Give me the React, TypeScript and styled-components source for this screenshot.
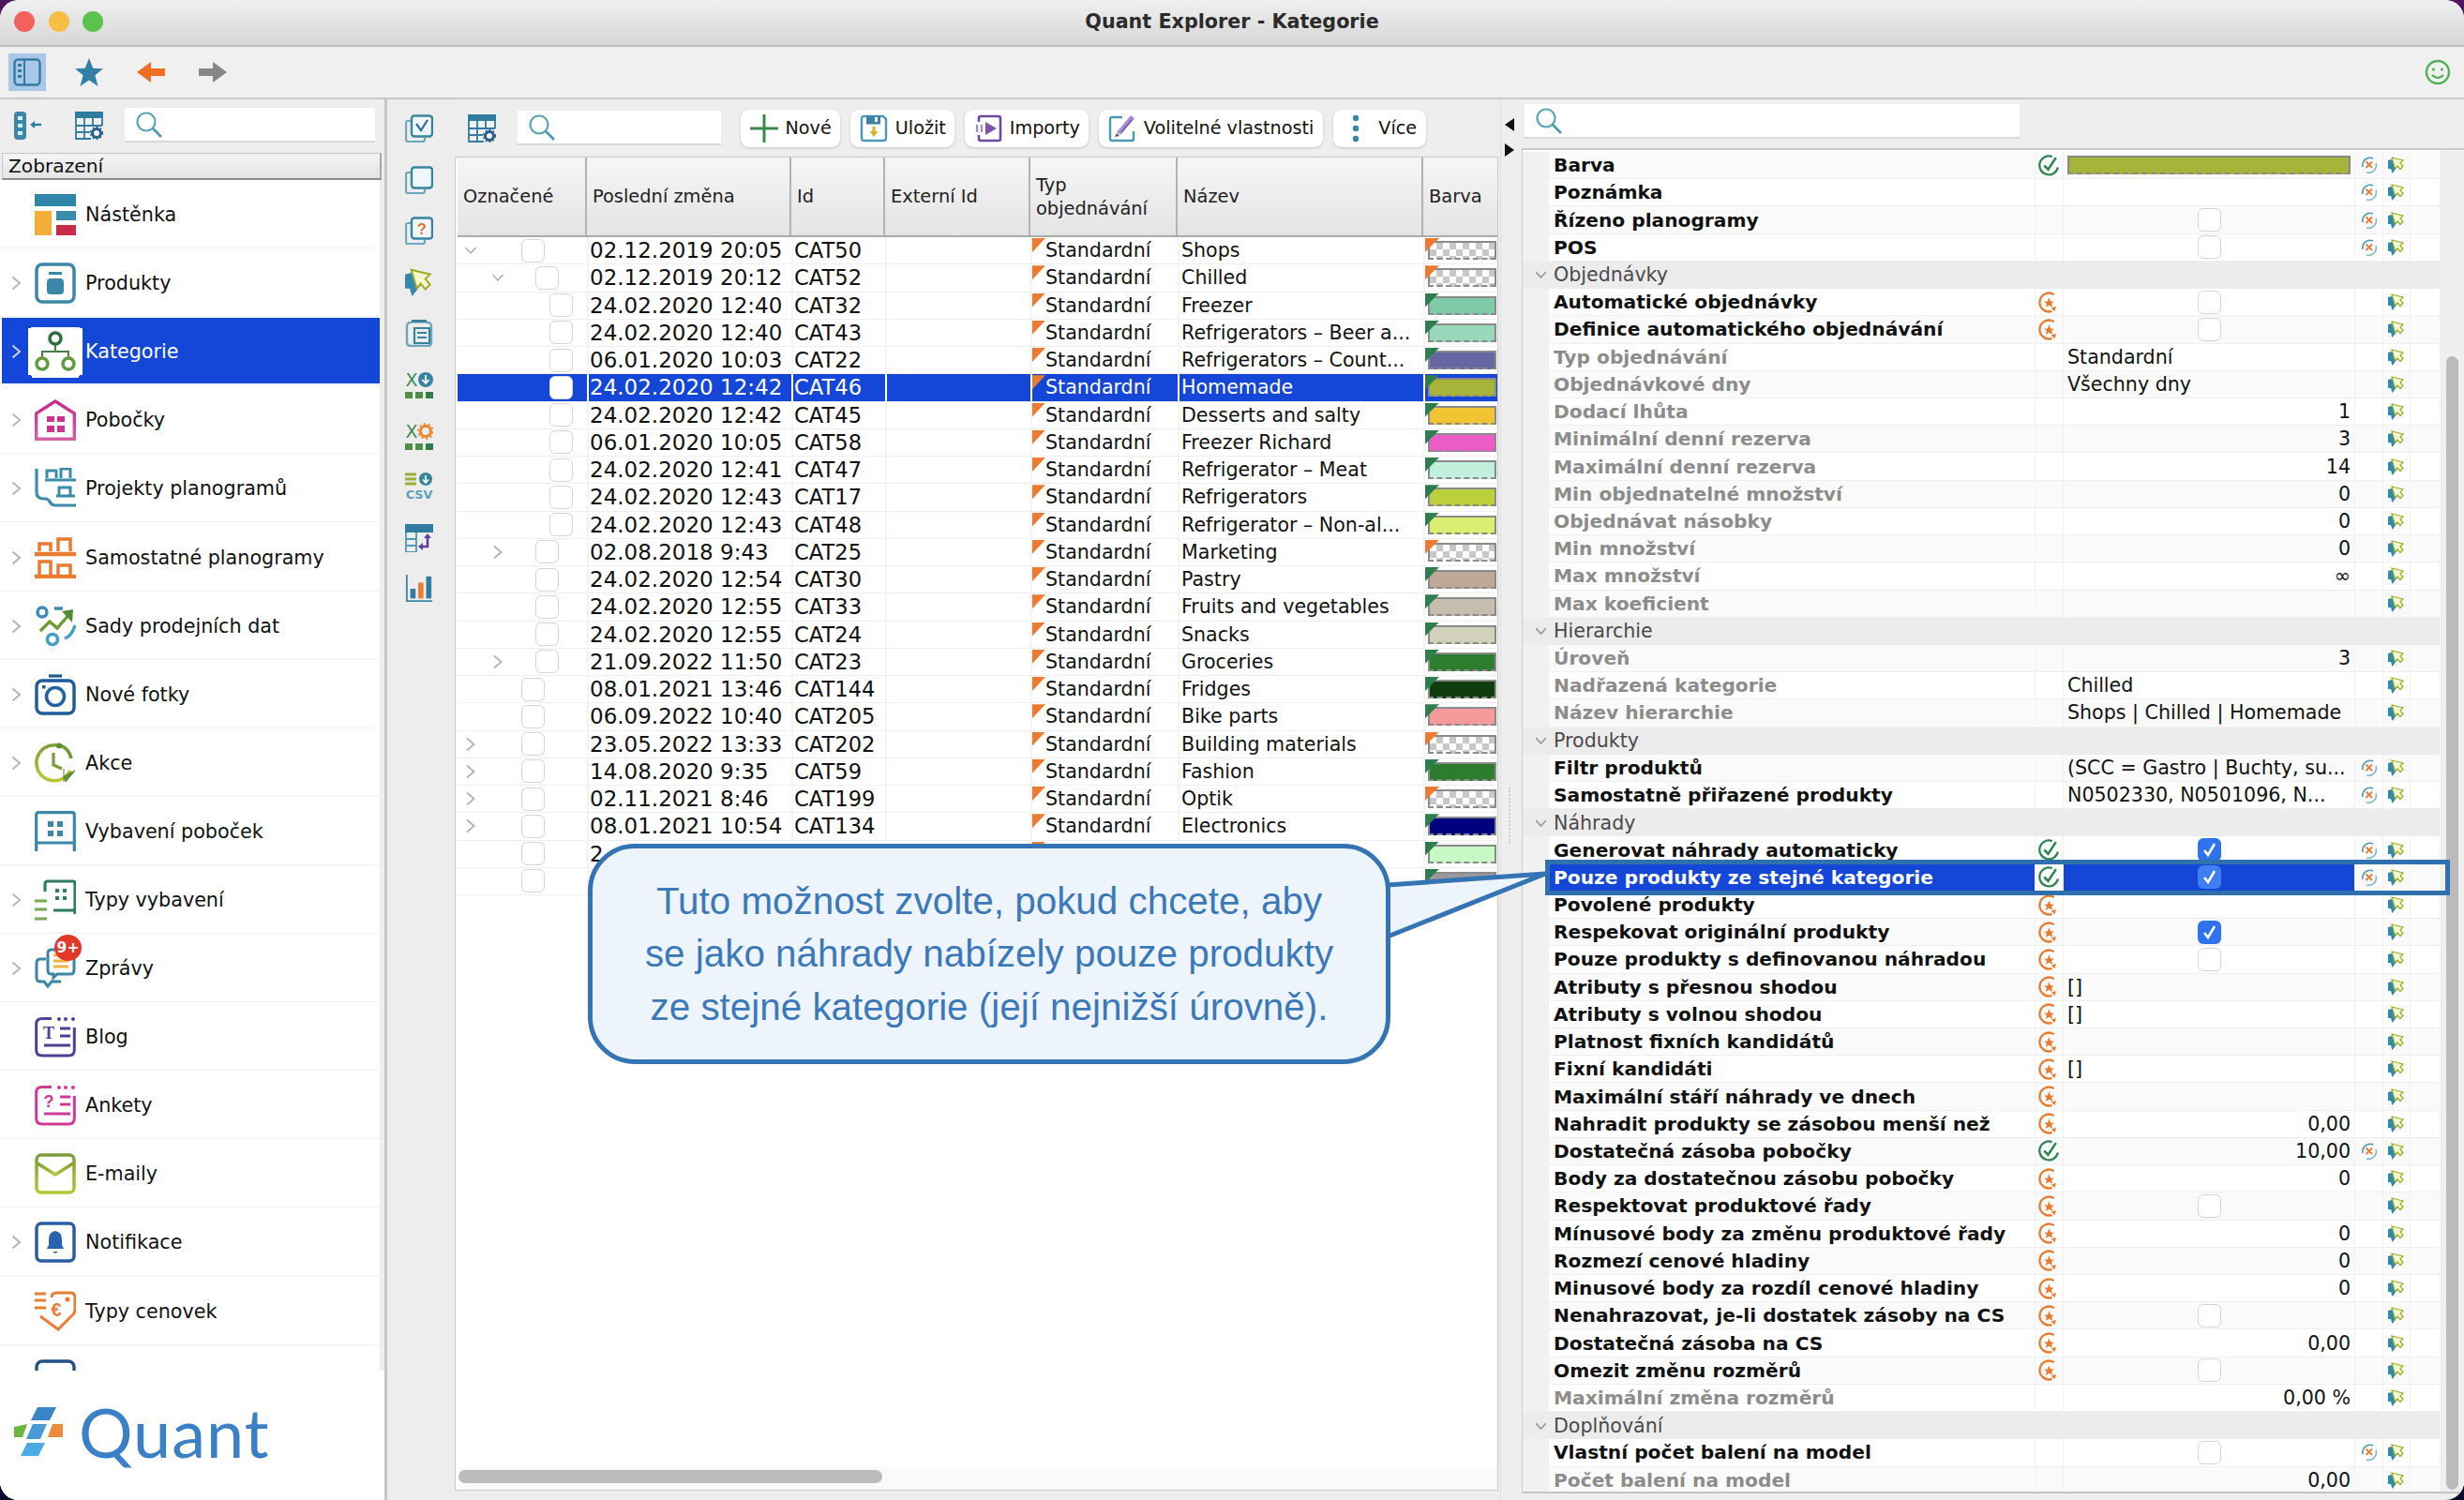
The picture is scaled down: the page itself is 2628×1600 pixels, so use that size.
import React from 'react';
import styled, { createGlobalStyle } from 'styled-components';

const Global = createGlobalStyle`
  html, body { margin: 0; padding: 0; background: linear-gradient(180deg, #4d1660 0%, #1a1240 50%, #0a0c2c 100%); }
  body { width: 2628px; height: 1600px; overflow: hidden; font-family: "DejaVu Sans", sans-serif; color: #111; }
  * { box-sizing: border-box; }
`;

const Window = styled.div`
  position: relative;
  width: 2628px;
  height: 1600px;
  border-radius: 20px;
  overflow: hidden;
  background: #eeeeee;
  display: flex;
  flex-direction: column;
`;
const TitleBar = styled.div`
  height: 50px;
  flex: none;
  background: linear-gradient(180deg, #f0f0f0, #d6d6d6);
  border-bottom: 2px solid #bcbcbc;
  display: grid;
  grid-template-columns: 1fr auto 1fr;
  align-items: center;
  padding: 0 15px;
`;
const Lights = styled.div`display: flex; gap: 14.5px; margin-top: -2px;`;
const Light = styled.span<{ $c: string }>`
  width: 22px; height: 22px; border-radius: 50%; background: ${p => p.$c};
`;
const WindowTitle = styled.div`font-size: 20.7px; font-weight: 700; color: #2b2b2b; margin-top: -3px;`;

const MainToolbar = styled.div`
  height: 56px;
  flex: none;
  display: flex;
  align-items: center;
  padding: 0 0 0 9px;
  background: #f0f0f0;
  border-bottom: 2px solid #c8c8c8;
`;
const ToolToggle = styled.div<{ $on?: boolean }>`
  width: 40px; height: 40px;
  display: flex; align-items: center; justify-content: center;
  margin-right: 26px;
  background: ${p => (p.$on ? '#a9c7e8' : 'transparent')};
`;
const ToolSpacer = styled.div`flex: 1;`;
const SmileSlot = styled.div`width: 28px; height: 28px; margin-right: 14px;`;

const Workspace = styled.div`flex: 1; display: flex; min-height: 0;`;

const Sidebar = styled.aside`
  width: 410px; flex: none; display: flex; flex-direction: column; background: #eee;
`;
const SideTools = styled.div`
  height: 57px; flex: none; display: flex; align-items: center; padding: 0 0 2px 15px;
`;
const SideToolIcon = styled.div<{ $gap: number }>`
  width: 30px; height: 30px; margin-right: ${p => p.$gap}px;
`;
const SearchBox = styled.div<{ $w: number; $h?: number }>`
  width: ${p => p.$w}px;
  height: ${p => p.$h ?? 37}px;
  flex: none;
  display: flex; align-items: center;
  padding-left: 11px;
  background: #fff;
  border-bottom: 2px solid #d8d8d8;
`;
const CenterSearch = styled(SearchBox)`margin-right: 10px;`;
const SideTitle = styled.div`
  height: 29px; flex: none;
  margin: 0 3px 0 2px;
  padding-left: 6px;
  display: flex; align-items: center;
  font-size: 20.2px;
  background: linear-gradient(180deg, #f5f5f5, #e4e4e4);
  border: 1px solid #c4c4c4;
  border-bottom: 2px solid #8d8d8d;
  border-right: 2px solid #a8a8a8;
`;
const NavList = styled.nav`
  height: 1270px; flex: none; overflow: hidden; background: #fff; margin-right: 5px;
`;
const NavRow = styled.div`
  position: relative;
  height: 73.1px;
  display: flex; align-items: center;
  padding: 2px 0 0 12px;
  border-bottom: 1px solid #f1f1f1;
`;
const NavHighlight = styled.div`
  position: absolute; left: 2px; right: 0; top: 1px; bottom: 1px; background: #1446d8;
`;
const NavChevron = styled.div`
  position: relative; width: 11px; height: 16px; margin-right: 14px; flex: none;
`;
const NavIconBox = styled.div<{ $sel?: boolean }>`
  position: relative; width: 44px; height: 44px; flex: none; margin-right: 10px;
  ${p => p.$sel && `
    background: #fff;
    box-shadow: 0 0 0 4px #fff, 4px 0 0 3px #fff, -4px 0 0 3px #fff, 0 3px 0 3px #fff;
  `}
`;
const NavLabel = styled.span<{ $sel?: boolean }>`
  position: relative; font-size: 20.7px; color: ${p => (p.$sel ? '#fff' : '#111')};
`;
const Badge = styled.span`
  position: absolute; left: 21px; top: -14px;
  width: 29px; height: 28px; border-radius: 50%;
  background: #e2382b; color: #fff;
  font-size: 15.5px; font-weight: 700;
  display: flex; align-items: center; justify-content: center;
`;
const LogoArea = styled.div`
  flex: 1; background: #fff; display: flex; align-items: center; padding: 0 0 8px 15px; gap: 17px;
`;
const LogoText = styled.span`
  font-family: "Lato", sans-serif; font-size: 72px; font-weight: 400; color: #3a80c6; line-height: 1; letter-spacing: 1px;
`;

const ToolStrip = styled.div`
  width: 74px; flex: none; border-left: 3px solid #c6c6c6;
  display: flex; flex-direction: column; align-items: center;
  padding: 16px 3px 0 0; gap: 24.6px; background: #ededed;
`;
const StripIcon = styled.div`width: 30px; height: 30px;`;

const CenterPane = styled.section`
  width: 1116px; flex: none; display: flex; flex-direction: column; padding-bottom: 10px;
`;
const CenterTools = styled.div`
  height: 61px; flex: none; display: flex; align-items: center; padding-left: 15px; gap: 11px;
`;
const TableIconSlot = styled.div`width: 30px; height: 30px; margin-right: 12px;`;
const ToolButton = styled.button`
  height: 40px; display: flex; align-items: center; gap: 8px; padding: 0 9.5px;
  border: 0; border-radius: 9px; background: #fff;
  box-shadow: 0 1px 3px rgba(0,0,0,.18);
  font: 19.2px "DejaVu Sans", sans-serif; color: #111;
`;
const MoreDots = styled.div`width: 30px; height: 30px; margin-right: 1px;`;
const TableBox = styled.div`
  flex: 1; display: flex; flex-direction: column; margin: 0 2px 0 1px;
  background: #fff; border: 1px solid #c9c9c9; padding-left: 2px; min-height: 0;
`;
const cols = '138px 218px 100px 155px 157px 262px 1fr';
const HeadRow = styled.div`
  height: 85px; flex: none; display: grid; grid-template-columns: ${cols};
  border-bottom: 2px solid #ababab;
  background: linear-gradient(180deg, #f6f6f6, #e4e4e4);
`;
const HeadCell = styled.div`
  display: flex; align-items: center; padding: 0 0 0 6px;
  font-size: 19.4px; line-height: 25px; color: #222;
  border-right: 2px solid #b2b2b2;
  &:last-child { border-right: 0; }
`;
const HeadStack = styled.span`display: block;`;
const Body = styled.div`flex: 1; min-height: 0; overflow: hidden;`;
const TRow = styled.div<{ $sel?: boolean }>`
  height: 29.25px; display: grid; grid-template-columns: ${cols};
  border-bottom: 1px solid #efefef;
  color: ${p => (p.$sel ? '#fff' : '#111')};
  background: ${p => (p.$sel ? '#1446d8' : '#fff')};
`;
const TreeCell = styled.div<{ $level: number }>`
  display: flex; align-items: center; padding-left: ${p => 7 + 29 * p.$level}px;
`;
const TreeCheck = styled.div<{ $level: number }>`
  margin-left: ${p => 47 - 14 * p.$level}px;
`;
const Cell = styled.div<{ $size?: number; $pad?: number; $sel?: boolean }>`
  display: flex; align-items: center; white-space: nowrap; overflow: hidden;
  font-size: ${p => p.$size ?? 20.6}px;
  padding-left: ${p => p.$pad ?? 1}px;
  border-left: 2px solid ${p => (p.$sel ? '#fff' : '#f4f4f4')};
`;
const TypeCell = styled(Cell)`
  position: relative;
  &::before {
    content: ''; position: absolute; left: 0; top: 1px; width: 14px; height: 15px;
    background: #ee7a30; clip-path: polygon(0 0, 100% 0, 0 100%);
  }
`;
const SwatchCell = styled.div<{ $sel?: boolean }>`
  position: relative; display: flex; align-items: center; padding-left: 3px;
  border-left: 2px solid ${p => (p.$sel ? '#fff' : '#f4f4f4')};
`;
const Corner = styled.span<{ $c: string }>`
  position: absolute; left: 0; top: 1px; width: 15px; height: 15px;
  background: ${p => p.$c}; clip-path: polygon(0 0, 100% 0, 0 100%);
`;
const Swatch = styled.span<{ $c?: string; $full?: boolean }>`
  display: block;
  width: ${p => (p.$full ? '303px' : '73px')};
  height: 20px;
  border: 2px solid #8a8a8a;
  border-bottom-style: dashed;
  background: ${p => p.$c ?? 'repeating-conic-gradient(#c8c8c8 0 25%, #fff 0 50%) 0 0 / 14px 14px'};
`;
const Check = styled.span<{ $on?: boolean; $sel?: boolean }>`
  display: flex; align-items: center; justify-content: center;
  width: 25px; height: 25px; border-radius: 6px;
  flex: none;
  background: ${p => (p.$sel && p.$on ? '#3f7ff2' : p.$on ? '#2f72ee' : '#fff')};
  border: ${p => (p.$on ? '0' : '1.5px solid #d4d4d4')};
`;
const HScroll = styled.div`height: 24px; flex: none; padding: 3px 0 0 1px; background: #fafafa;`;
const HThumb = styled.div`width: 452px; height: 14px; border-radius: 7px; background: #bcbcbc;`;

const Splitter = styled.div`
  width: 23px; flex: none; display: flex; flex-direction: column; align-items: center;
  padding: 20px 5px 0 0; gap: 13px; border-left: 1px solid #dedede;
`;
const Grip = styled.div`
  width: 0; height: 60px; margin-top: 660px; border-left: 2px dotted #cfcfcf;
`;
const RightPane = styled.section`width: 1005px; flex: none; display: flex; flex-direction: column;`;
const RightTools = styled.div`height: 52px; flex: none; padding: 5px 0 0 3px;`;
const RightBody = styled.div`
  height: 1435px; flex: none; display: flex;
  border-top: 2px solid #c9c9c9; border-bottom: 2px solid #c4c4c4; background: #fff;
`;
const PropList = styled.div`
  width: 979px; flex: none; overflow: hidden; padding-top: 2px; border-left: 1px solid #cfcfcf;
`;
const ScrollTrack = styled.div`flex: 1; background: #efefef; padding: 220px 6px 2px 7px;`;
const ScrollThumb = styled.div`height: 100%; border-radius: 7px; background: #bbbbbb;`;
const propCols = '28px 518px 30px 311px 30px 29px 1fr';
const PropRow = styled.div<{ $odd?: boolean }>`
  height: 29.23px; display: grid; grid-template-columns: ${propCols};
  background: ${p => (p.$odd ? '#fff' : '#fafafa')};
  border-bottom: 1px solid #f0f0f0;
`;
const SectionRow = styled.div`
  height: 29.23px; display: flex; align-items: center; background: #ececec;
  font-size: 20.6px; color: #4a4a4a;
`;
const SectionChev = styled.div`width: 33px; flex: none; display: flex; justify-content: flex-end; padding-right: 8px;`;
const Gutter = styled.div`background: #f1f1f1;`;
const PropName = styled.div<{ $gray?: boolean; $sel?: boolean }>`
  display: flex; align-items: center; padding-left: 5px; white-space: nowrap; overflow: hidden;
  font-size: 20.2px; font-weight: 700;
  color: ${p => (p.$sel ? '#fff' : p.$gray ? '#8c8c8c' : '#111')};
  background: ${p => (p.$sel ? '#1446d8' : 'transparent')};
`;
const IconCell = styled.div`
  display: flex; align-items: center; justify-content: center; border-left: 1px solid #f2f2f2;
`;
const PropValue = styled.div<{ $align?: string; $sel?: boolean }>`
  display: flex; align-items: center; white-space: nowrap; overflow: hidden;
  justify-content: ${p => (p.$align === 'right' ? 'flex-end' : p.$align === 'center' ? 'center' : 'flex-start')};
  padding: 0 4px 0 4px;
  font-size: 20.6px; color: #111;
  background: ${p => (p.$sel ? '#1446d8' : 'transparent')};
  border-left: 1px solid #f2f2f2;
`;

const Callout = styled.div`
  position: absolute; left: 627px; top: 900px; width: 856px; height: 235px;
  border: 5px solid #3574b4; border-radius: 50px; background: #eef4fb;
  display: flex; align-items: center; justify-content: center; text-align: center;
  font-family: "Liberation Sans", Arial, sans-serif; font-size: 40.4px; line-height: 56.5px; color: #3b79ba;
`;
const CalloutTail = styled.svg`position: absolute; left: 1476px; top: 925px; width: 180px; height: 80px;`;
const RowFocus = styled.div`
  position: absolute; left: 1648px; top: 917px; width: 965px; height: 38px; border: 5px solid #2f70ae;
`;

/* ---------- icons ---------- */
const Svg = (p: { s?: number; w?: number; h?: number; vb: string; children: React.ReactNode }) => (
  <svg width={p.w ?? p.s ?? 44} height={p.h ?? p.s ?? 44} viewBox={p.vb} fill="none" style={{ display: 'block' }}>{p.children}</svg>
);
const T = '#3a87a8';

const Nastenka = () => <Svg vb="0 0 44 44"><rect width="44" height="13" fill="#2f86a8"/><rect y="18" width="18" height="26" fill="#f2ae35"/><rect x="23" y="18" width="21" height="10" fill="#3a8cab"/><rect x="23" y="33" width="21" height="11" fill="#c92c46"/></Svg>;
const Produkt = () => <Svg vb="0 0 44 44"><rect x="2" y="2" width="40" height="40" rx="6" stroke={T} strokeWidth="3.5"/><rect x="15" y="10" width="14" height="3" fill={T}/><rect x="13" y="17" width="18" height="17" rx="4" fill={T}/></Svg>;
const Kategorie = () => <Svg vb="0 0 44 44"><path d="M22 14V22M8 28V22H36V28" stroke="#4b7f45" strokeWidth="2"/><circle cx="22" cy="8" r="6" stroke="#2d6e3c" strokeWidth="3.5"/><circle cx="8" cy="35" r="6" stroke="#5f9b40" strokeWidth="3.5"/><circle cx="36" cy="35" r="6" stroke="#5f9b40" strokeWidth="3.5"/></Svg>;
const Pobocky = () => <Svg vb="0 0 44 44"><defs><linearGradient id="pg" x1="0" y1="0" x2="0" y2="1"><stop offset="0" stopColor="#c92b86"/><stop offset="1" stopColor="#d45fa6"/></linearGradient></defs><path d="M1.7 42.3V15L22 2l20.3 13v27.3z" stroke="url(#pg)" strokeWidth="3.4"/><path d="M13 18h8v6h-8zM24 18h8v6h-8zM13 28h8v7h-8zM24 28h8v7h-8z" fill="#cc3390"/></Svg>;
const Projekty = () => <Svg vb="0 0 44 44"><path d="M2 1V26Q2 33 9 33H12Q14 33 16 36Q18 40 22 40H44" stroke="#3a8cab" strokeWidth="3.2"/><path d="M11 13H44" stroke="#3a8cab" strokeWidth="3.2"/><path d="M13 11V3H23V11M28 11V1H38V11" stroke="#3a8cab" strokeWidth="3"/><path d="M23 30H43M26 30V21H38V30" stroke="#3a8cab" strokeWidth="3"/></Svg>;
const Samostatne = () => <Svg vb="0 0 44 44"><path d="M0 18H44M0 42H44" stroke="#ec7b32" strokeWidth="4.5"/><path d="M5 15V7H17V15M25 15V2H38V15M5 40V26H17V40M25 40V30H38V40" stroke="#ec7b32" strokeWidth="3.5"/></Svg>;
const Sady = () => <Svg vb="0 0 44 44"><circle cx="8" cy="7" r="5" stroke="#3a8cc0" strokeWidth="3.4"/><path d="M21 3H30" stroke="#3a87a8" strokeWidth="3.4"/><circle cx="19" cy="36" r="5.5" stroke="#45a0c4" strokeWidth="3.6"/><path d="M32 35Q40 32 43 21" stroke="#45a0c4" strokeWidth="3.4"/><path d="M6 27L16 17L24 24L38 8" stroke="#6e9a32" strokeWidth="3.4"/><path d="M29 6L41 4L40 18z" fill="#4f8f3a"/></Svg>;
const Camera = () => <Svg vb="0 0 44 44"><rect x="2" y="7" width="40" height="35" rx="6" stroke="#1f5b9c" strokeWidth="3.4"/><path d="M15 2H29" stroke="#1f5b9c" strokeWidth="3.2"/><circle cx="22" cy="24" r="9.5" stroke="#24629f" strokeWidth="3.6"/><rect x="8" y="12" width="3.5" height="3.5" fill="#1f5b9c"/></Svg>;
const Akce = () => <Svg vb="0 0 44 44"><defs><linearGradient id="ag" x1="0" y1="0" x2="0" y2="1"><stop offset="0" stopColor="#7fa03a"/><stop offset="1" stopColor="#bcc438"/></linearGradient></defs><path d="M24 3A19 19 0 1 0 38 30" stroke="url(#ag)" strokeWidth="3.6"/><path d="M27 3A19 19 0 0 1 39 17" stroke="#6e9a32" strokeWidth="3.6"/><path d="M20 11V24L29 28" stroke="#7c9c34" strokeWidth="3.2"/><path d="M31 36L43 30L33 42z M31 28V42" fill="#5f8f30" stroke="#5f8f30" strokeWidth="1"/><circle cx="26" cy="3.5" r="3" fill="#5f8f30"/></Svg>;
const Vybaveni = () => <Svg vb="0 0 44 44"><path d="M1.7 43V4Q1.7 1.7 4 1.7H40Q42.3 1.7 42.3 4V43M1.7 34H42.3" stroke="#3a87a8" strokeWidth="3.2"/><path d="M14 11h6v6h-6zM24 11h6v6h-6zM14 21h6v6h-6zM24 21h6v6h-6z" fill="#3a87a8"/></Svg>;
const TypyVyb = () => <Svg vb="0 0 44 44"><path d="M11 13V5Q11 2 14 2H41Q43 2 43 5V37M20 33H42" stroke="#2f7d5a" strokeWidth="3.2"/><path d="M22 10h4v4h-4zM30 10h4v4h-4zM22 18h4v4h-4zM30 18h4v4h-4z" fill="#2f7d5a"/><path d="M0 23H13M0 32H13M0 42H13" stroke="#79a855" strokeWidth="3.2"/></Svg>;
const Zpravy = () => <Svg vb="0 0 44 44"><path d="M12 12H6Q2 12 2 16V32Q2 36 6 36H10L14 41L18 36H28" stroke="#3a87a8" strokeWidth="3"/><path d="M14 6Q14 2 18 2H38Q42 2 42 6V24Q42 28 38 28H24L20 32V28H18Q14 28 14 24z" stroke="#3a87a8" strokeWidth="3"/><path d="M20 8H36M20 14H36M20 20H36" stroke="#f0b23c" strokeWidth="3"/></Svg>;
const Doc = ({ c, glyph, serif }: { c: string; glyph: string; serif?: boolean }) => <Svg vb="0 0 44 44"><path d="M18 2.5H8Q1.7 2.5 1.7 8V36Q1.7 42 8 42H36Q42.3 42 42.3 36V12" stroke={c} strokeWidth="3"/><circle cx="26" cy="3" r="2" fill={c}/><circle cx="33" cy="3" r="2" fill={c}/><circle cx="41" cy="3" r="2" fill={c}/><path d="M27 13H38M27 21H38M10 31H38" stroke={c} strokeWidth="3"/><text x="15" y="24" textAnchor="middle" fontSize="18" fontWeight="700" fontFamily={serif ? 'Liberation Serif' : 'Liberation Sans'} fill={c}>{glyph}</text></Svg>;
const Mail = () => <Svg vb="0 0 44 44"><defs><linearGradient id="mg" x1="0" y1="0" x2="0" y2="1"><stop offset="0" stopColor="#7c9c3a"/><stop offset="1" stopColor="#b6c634"/></linearGradient></defs><rect x="2" y="2" width="40" height="40" rx="5" stroke="url(#mg)" strokeWidth="3.5"/><path d="M3 11L22 23L41 11" stroke="url(#mg)" strokeWidth="3.5"/></Svg>;
const Notif = () => <Svg vb="0 0 44 44"><rect x="2" y="2" width="40" height="40" rx="5" stroke="#2a5ea4" strokeWidth="3.5"/><path d="M22 10Q15 11 15 19V25L13 29H31L29 25V19Q29 11 22 10z" fill="#2a62ae"/><path d="M19 32H25L22 34z" fill="#2a62ae"/></Svg>;
const Cenovka = () => <Svg vb="0 0 44 44"><path d="M0 3H12M0 10H12M0 18H12" stroke="#ea7c34" strokeWidth="3"/><path d="M18 7Q18 2 23 2H38Q43 2 43 7V20Q43 23 41 25L25 41L6 27" stroke="#ea7c34" strokeWidth="3"/><circle cx="35" cy="9" r="2.6" fill="#ea7c34"/><text x="23" y="27" textAnchor="middle" fontSize="20" fontWeight="700" fontFamily="Liberation Sans" fill="#ea7c34">€</text></Svg>;
const NextCut = () => <Svg vb="0 0 44 44"><rect x="2" y="2" width="40" height="40" rx="6" stroke="#234f8c" strokeWidth="3.4"/></Svg>;

const Chevron = ({ down, c = '#b6b6b6', w = 11, h = 16 }: { down?: boolean; c?: string; w?: number; h?: number }) => (
  <Svg w={w} h={h} vb="0 0 11 16">{down
    ? <path d="M0 5L5.5 11L11 5" stroke={c} strokeWidth="1.8"/>
    : <path d="M1.5 1.5L9 8L1.5 14.5" stroke={c} strokeWidth="2"/>}</Svg>
);
const Magnifier = () => <Svg s={30} vb="0 0 30 30"><circle cx="12" cy="12" r="9.5" stroke="#5aa6b8" strokeWidth="2.2"/><path d="M19 19L28 28" stroke="#4d97ab" strokeWidth="2.6"/></Svg>;
const TableGear = () => <Svg s={30} vb="0 0 30 30"><rect x="0.5" y="0.5" width="29" height="29" fill="#fff" opacity=".2"/><rect width="30" height="7" fill="#2f7c9e"/><path d="M1 7V29H17M10 7V29M19 7V15M29 7V15M1 15H29M1 22H16" stroke="#2f7c9e" strokeWidth="1.8"/><circle cx="23" cy="23" r="4.5" stroke="#245d8a" strokeWidth="3"/><circle cx="23" cy="23" r="6.5" stroke="#245d8a" strokeWidth="1.2" strokeDasharray="2 2.2"/></Svg>;
const Collapse = () => <Svg s={30} vb="0 0 30 30"><rect x="0" y="0" width="13" height="30" rx="4" fill="#3a87a8"/><rect x="4" y="5" width="5" height="4" fill="#dbeef5"/><rect x="4" y="13" width="5" height="4" fill="#dbeef5"/><rect x="4" y="21" width="5" height="4" fill="#dbeef5"/><path d="M19 14H29" stroke="#2f7c9e" strokeWidth="2.6"/><path d="M17 14L22 10V18z" fill="#2f7c9e"/></Svg>;
const Panel = () => <Svg s={30} vb="0 0 30 30"><rect x="1.5" y="1.5" width="27" height="27" rx="4" stroke="#35799e" strokeWidth="2.4"/><path d="M12 2V28" stroke="#35799e" strokeWidth="2"/><rect x="5" y="6" width="4" height="3" fill="#35799e"/><rect x="5" y="12" width="4" height="3" fill="#35799e"/><rect x="5" y="18" width="4" height="3" fill="#35799e"/></Svg>;
const Star = () => <Svg s={32} vb="0 0 30 30"><path d="M15 1L19 11L29 11.5L21 18L24 29L15 23L6 29L9 18L1 11.5L11 11z" fill="#337fa6"/></Svg>;
const ArrowBack = () => <Svg w={30} h={22} vb="0 0 30 22"><path d="M0 11L15 0V7H30V15H15V22z" fill="#ee6f22"/></Svg>;
const ArrowFwd = () => <Svg w={30} h={22} vb="0 0 30 22"><path d="M30 11L15 0V7H0V15H15V22z" fill="#868686"/></Svg>;
const Smile = () => <Svg s={28} vb="0 0 28 28"><circle cx="14" cy="14" r="12" stroke="#4fae52" strokeWidth="2.4"/><circle cx="9.5" cy="11" r="1.6" fill="#4fae52"/><circle cx="18.5" cy="11" r="1.6" fill="#4fae52"/><path d="M8 17Q14 23 20 17" stroke="#4fae52" strokeWidth="2.2"/></Svg>;

const Plus = () => <Svg s={30} vb="0 0 30 30"><path d="M15 0V30M0 15H30" stroke="#3b8a4c" strokeWidth="3"/></Svg>;
const Save = () => <Svg s={30} vb="0 0 30 30"><path d="M2 5Q2 2 5 2H25L28 5V25Q28 28 25 28H5Q2 28 2 25z" stroke="#4b9ab5" strokeWidth="2.4"/><rect x="7" y="1.5" width="15" height="9" fill="#3c84a6"/><rect x="16" y="3" width="3" height="5" fill="#fff"/><path d="M15 13V19" stroke="#d6b02c" strokeWidth="3"/><path d="M10.5 18H19.5L15 24z" fill="#d6b02c"/></Svg>;
const Imports = () => <Svg s={30} vb="0 0 30 30"><path d="M5 8V4Q5 2 7 2H26Q28 2 28 4V26Q28 28 26 28H7Q5 28 5 26V22" stroke="#6d4a9e" strokeWidth="2.6"/><path d="M3 11V19M8 11V19" stroke="#a78bcf" strokeWidth="2.2"/><path d="M12 8L24 15L12 22z" fill="#7b55ad"/></Svg>;
const Edit = () => <Svg s={30} vb="0 0 30 30"><path d="M15 3H4Q2 3 2 5V26Q2 28 4 28H25Q27 28 27 26V18" stroke="#4b98b3" strokeWidth="2.4"/><path d="M9 19L24 1L28 4L13 22z" fill="#a58fd0"/><path d="M14 19L26 5" stroke="#7b55ad" strokeWidth="1.6"/><path d="M7 24L9 20L12 23z" fill="#555"/></Svg>;
const Dots = () => <Svg s={30} vb="0 0 30 30"><circle cx="15" cy="4" r="3.2" fill="#3a87a8"/><circle cx="15" cy="15" r="3.2" fill="#3a87a8"/><circle cx="15" cy="26" r="3.2" fill="#3a87a8"/></Svg>;
const Tick = ({ size = 17 }: { size?: number }) => <Svg s={size} vb="0 0 17 17"><path d="M3 9L7 14L14 2" stroke="#fff" strokeWidth="2.6"/></Svg>;

const PagesBase = ({ children }: { children?: React.ReactNode }) => <><path d="M6 7H3Q1 7 1 9V27Q1 29 3 29H19Q21 29 21 27V25" stroke="#6aa8bd" strokeWidth="2.2"/><rect x="7" y="1.5" width="22" height="22" rx="3" stroke="#37849f" strokeWidth="2.4" fill="#eef6f9"/>{children}</>;
const PagesCheck = () => <Svg s={30} vb="0 0 30 30"><PagesBase><path d="M12 10L17 17L24 6" stroke="#2f6f9e" strokeWidth="2.2"/></PagesBase></Svg>;
const Pages = () => <Svg s={30} vb="0 0 30 30"><PagesBase/></Svg>;
const PagesQ = () => <Svg s={30} vb="0 0 30 30"><PagesBase><text x="18" y="19" textAnchor="middle" fontSize="16" fontWeight="700" fontFamily="Liberation Sans" fill="#e0762e">?</text></PagesBase></Svg>;
const Cursor = ({ s = 30 }: { s?: number }) => <Svg w={s} h={s} vb="0 0 18 18"><path d="M0 4L8 2L10 11L4.5 18L3 13L0 13z" fill="#2f8ab0"/><path d="M4 1L16 4L13 7L16 10.5L13 13.5L10 10L7.5 13z" fill="#f4f7d0" stroke="#9dab28" strokeWidth="1.2"/></Svg>;
const Clip = () => <Svg s={30} vb="0 0 30 30"><path d="M7 4H6Q2 4 2 8V25Q2 29 6 29H24Q28 29 28 25V8Q28 4 24 4H23" stroke="#6aa8bd" strokeWidth="2.4"/><rect x="7" y="1" width="16" height="3.4" fill="#37849f"/><path d="M10 10H26V26H10z" stroke="#37849f" strokeWidth="2.2"/><path d="M13 15H23M13 20H23" stroke="#37849f" strokeWidth="2"/></Svg>;
const XBase = ({ children }: { children?: React.ReactNode }) => <><text x="7" y="17" textAnchor="middle" fontSize="19" fontFamily="DejaVu Sans" fill="#3f8a4e">X</text>{children}<rect x="0" y="23" width="8" height="7" fill="#4d8f45"/><rect x="11" y="23" width="8" height="7" fill="#4d8f45"/><rect x="22" y="23" width="8" height="7" fill="#2f7d4a"/></>;
const XDown = () => <Svg s={30} vb="0 0 30 30"><XBase><circle cx="22" cy="10" r="8" fill="#37849f"/><path d="M22 5V13M18.5 10L22 14L25.5 10" stroke="#fff" strokeWidth="1.8"/></XBase></Svg>;
const XGear = () => <Svg s={30} vb="0 0 30 30"><XBase><circle cx="22" cy="10" r="5.5" stroke="#e88a2e" strokeWidth="3.2"/><circle cx="22" cy="10" r="8" stroke="#e88a2e" strokeWidth="1.6" strokeDasharray="2.5 2.5"/></XBase></Svg>;
const Csv = () => <Svg s={30} vb="0 0 30 30"><path d="M0 2H12M0 7H12M0 12H12" stroke="#9caf3a" strokeWidth="3"/><circle cx="22" cy="7" r="7" fill="#37849f"/><path d="M22 3V10M19 7.5L22 11L25 7.5" stroke="#fff" strokeWidth="1.6"/><text x="15" y="28" textAnchor="middle" fontSize="12.8" fontWeight="700" fontFamily="DejaVu Sans" fill="#5ba2b7">CSV</text></Svg>;
const TableSwap = () => <Svg s={30} vb="0 0 30 30"><rect width="30" height="9" fill="#2f7c9e"/><path d="M1 9V30H12V9M1 16H12M1 23H12" stroke="#4b98b3" strokeWidth="1.8"/><path d="M24 12V24H17" stroke="#5d3f96" strokeWidth="2.6"/><path d="M20 15L24 10L28 15zM19 20V28L14 24z" fill="#5d3f96"/></Svg>;
const Bars = () => <Svg s={30} vb="0 0 30 32"><path d="M1 0V30H30" stroke="#3a87a8" strokeWidth="2"/><rect x="5" y="16" width="6" height="11" fill="#2f7c9e"/><rect x="14" y="9" width="6" height="18" fill="#ea7c34"/><rect x="23" y="2" width="6" height="25" fill="#2f7c9e"/></Svg>;

const MarkGreen = () => <Svg s={23} vb="0 0 22 22"><path d="M14 2A9.5 9.5 0 1 0 20 13" stroke="#2f8552" strokeWidth="2.2"/><path d="M6 11L10 15L18 3" stroke="#2f8552" strokeWidth="2.4"/></Svg>;
const MarkOrange = () => <Svg s={23} vb="0 0 22 22"><path d="M16 3A9.5 9.5 0 1 0 14 20" stroke="#e97b30" strokeWidth="2.2"/><path d="M11 6L12.5 10H16L13.5 12.5L14.5 16L11 14L7.5 16L8.5 12.5L6 10H9.5z" fill="#e97b30"/><path d="M13 17L18 15L17 20z" fill="#e97b30"/></Svg>;
const ResetX = () => <Svg s={20} vb="0 0 20 20"><path d="M3 12A8 8 0 0 1 14 3" stroke="#4d97b5" strokeWidth="1.6"/><path d="M17 8A8 8 0 0 1 7 18" stroke="#7fb8cf" strokeWidth="1.6"/><path d="M6.5 6.5L13 13M13 6.5L6.5 13" stroke="#ea7a3a" strokeWidth="1.8"/></Svg>;

const Brand = () => <Svg w={52} h={52} vb="0 0 52 52"><path d="M25 0H45L38 14H18z" fill="#3a85c8"/><path d="M0 21L14 18L9 32H0z" fill="#6ab63c"/><path d="M20 18H35L28 34H13z" fill="#4a9ad8"/><path d="M41 18H52V32H36z" fill="#ee8b3a"/><path d="M14 38H33L26 52H7z" fill="#4aaae4"/></Svg>;

/* ---------- data ---------- */
type Nav = { label: string; icon: React.ReactNode; arrow?: boolean; sel?: boolean; badge?: boolean };
const nav: Nav[] = [
  { label: 'Nástěnka', icon: <Nastenka /> },
  { label: 'Produkty', icon: <Produkt />, arrow: true },
  { label: 'Kategorie', icon: <Kategorie />, arrow: true, sel: true },
  { label: 'Pobočky', icon: <Pobocky />, arrow: true },
  { label: 'Projekty planogramů', icon: <Projekty />, arrow: true },
  { label: 'Samostatné planogramy', icon: <Samostatne />, arrow: true },
  { label: 'Sady prodejních dat', icon: <Sady />, arrow: true },
  { label: 'Nové fotky', icon: <Camera />, arrow: true },
  { label: 'Akce', icon: <Akce />, arrow: true },
  { label: 'Vybavení poboček', icon: <Vybaveni /> },
  { label: 'Typy vybavení', icon: <TypyVyb />, arrow: true },
  { label: 'Zprávy', icon: <Zpravy />, arrow: true, badge: true },
  { label: 'Blog', icon: <Doc c="#4f3f96" glyph="T" serif /> },
  { label: 'Ankety', icon: <Doc c="#cf3a96" glyph="?" /> },
  { label: 'E-maily', icon: <Mail /> },
  { label: 'Notifikace', icon: <Notif />, arrow: true },
  { label: 'Typy cenovek', icon: <Cenovka /> },
  { label: '', icon: <NextCut /> },
];

type R = [number, '' | 'd' | 'r', string, string, string, string | null, boolean?];
const G = true;
const rows: R[] = [
  [0, 'd', '02.12.2019 20:05', 'CAT50', 'Shops', null],
  [1, 'd', '02.12.2019 20:12', 'CAT52', 'Chilled', null],
  [2, '', '24.02.2020 12:40', 'CAT32', 'Freezer', '#7fcaa8', G],
  [2, '', '24.02.2020 12:40', 'CAT43', 'Refrigerators – Beer a...', '#98d8bb', G],
  [2, '', '06.01.2020 10:03', 'CAT22', 'Refrigerators – Count...', '#6666a2', G],
  [2, '', '24.02.2020 12:42', 'CAT46', 'Homemade', '#a6b43a', G],
  [2, '', '24.02.2020 12:42', 'CAT45', 'Desserts and salty', '#f2c434', G],
  [2, '', '06.01.2020 10:05', 'CAT58', 'Freezer Richard', '#ec5cc6', G],
  [2, '', '24.02.2020 12:41', 'CAT47', 'Refrigerator – Meat', '#c0f0dc', G],
  [2, '', '24.02.2020 12:43', 'CAT17', 'Refrigerators', '#bcd03e', G],
  [2, '', '24.02.2020 12:43', 'CAT48', 'Refrigerator – Non-al...', '#daee72', G],
  [1, 'r', '02.08.2018 9:43', 'CAT25', 'Marketing', null],
  [1, '', '24.02.2020 12:54', 'CAT30', 'Pastry', '#c0a898', G],
  [1, '', '24.02.2020 12:55', 'CAT33', 'Fruits and vegetables', '#c6bdae', G],
  [1, '', '24.02.2020 12:55', 'CAT24', 'Snacks', '#d2d2bc', G],
  [1, 'r', '21.09.2022 11:50', 'CAT23', 'Groceries', '#2e7d2e', G],
  [0, '', '08.01.2021 13:46', 'CAT144', 'Fridges', '#0f3d0f', G],
  [0, '', '06.09.2022 10:40', 'CAT205', 'Bike parts', '#f59a9a', G],
  [0, 'r', '23.05.2022 13:33', 'CAT202', 'Building materials', null],
  [0, 'r', '14.08.2020 9:35', 'CAT59', 'Fashion', '#2e7d2e', G],
  [0, 'r', '02.11.2021 8:46', 'CAT199', 'Optik', null],
  [0, 'r', '08.01.2021 10:54', 'CAT134', 'Electronics', '#00007f', G],
  [0, '', '2', '', '', '#c8f8c4', G],
  [0, '', '', '', '', '#9a9a9a', G],
];

type M = '' | 'g' | 'o';
type P = { n: string; gray?: boolean; m?: M; v?: string; a?: 'l' | 'r'; c?: 0 | 1; x?: boolean; bar?: boolean; sel?: boolean; section?: boolean };
const props: P[] = [
  { n: 'Barva', m: 'g', bar: true, x: true },
  { n: 'Poznámka', x: true },
  { n: 'Řízeno planogramy', c: 0, x: true },
  { n: 'POS', c: 0, x: true },
  { n: 'Objednávky', section: true },
  { n: 'Automatické objednávky', m: 'o', c: 0 },
  { n: 'Definice automatického objednávání', m: 'o', c: 0 },
  { n: 'Typ objednávání', gray: true, v: 'Standardní', a: 'l' },
  { n: 'Objednávkové dny', gray: true, v: 'Všechny dny', a: 'l' },
  { n: 'Dodací lhůta', gray: true, v: '1', a: 'r' },
  { n: 'Minimální denní rezerva', gray: true, v: '3', a: 'r' },
  { n: 'Maximální denní rezerva', gray: true, v: '14', a: 'r' },
  { n: 'Min objednatelné množství', gray: true, v: '0', a: 'r' },
  { n: 'Objednávat násobky', gray: true, v: '0', a: 'r' },
  { n: 'Min množství', gray: true, v: '0', a: 'r' },
  { n: 'Max množství', gray: true, v: '∞', a: 'r' },
  { n: 'Max koeficient', gray: true },
  { n: 'Hierarchie', section: true },
  { n: 'Úroveň', gray: true, v: '3', a: 'r' },
  { n: 'Nadřazená kategorie', gray: true, v: 'Chilled', a: 'l' },
  { n: 'Název hierarchie', gray: true, v: 'Shops | Chilled | Homemade', a: 'l' },
  { n: 'Produkty', section: true },
  { n: 'Filtr produktů', v: '(SCC = Gastro | Buchty, su...', a: 'l', x: true },
  { n: 'Samostatně přiřazené produkty', v: 'N0502330, N0501096, N...', a: 'l', x: true },
  { n: 'Náhrady', section: true },
  { n: 'Generovat náhrady automaticky', m: 'g', c: 1, x: true },
  { n: 'Pouze produkty ze stejné kategorie', m: 'g', c: 1, x: true, sel: true },
  { n: 'Povolené produkty', m: 'o' },
  { n: 'Respekovat originální produkty', m: 'o', c: 1 },
  { n: 'Pouze produkty s definovanou náhradou', m: 'o', c: 0 },
  { n: 'Atributy s přesnou shodou', m: 'o', v: '[]', a: 'l' },
  { n: 'Atributy s volnou shodou', m: 'o', v: '[]', a: 'l' },
  { n: 'Platnost fixních kandidátů', m: 'o' },
  { n: 'Fixní kandidáti', m: 'o', v: '[]', a: 'l' },
  { n: 'Maximální stáří náhrady ve dnech', m: 'o' },
  { n: 'Nahradit produkty se zásobou menší než', m: 'o', v: '0,00', a: 'r' },
  { n: 'Dostatečná zásoba pobočky', m: 'g', v: '10,00', a: 'r', x: true },
  { n: 'Body za dostatečnou zásobu pobočky', m: 'o', v: '0', a: 'r' },
  { n: 'Respektovat produktové řady', m: 'o', c: 0 },
  { n: 'Mínusové body za změnu produktové řady', m: 'o', v: '0', a: 'r' },
  { n: 'Rozmezí cenové hladiny', m: 'o', v: '0', a: 'r' },
  { n: 'Minusové body za rozdíl cenové hladiny', m: 'o', v: '0', a: 'r' },
  { n: 'Nenahrazovat, je-li dostatek zásoby na CS', m: 'o', c: 0 },
  { n: 'Dostatečná zásoba na CS', m: 'o', v: '0,00', a: 'r' },
  { n: 'Omezit změnu rozměrů', m: 'o', c: 0 },
  { n: 'Maximální změna rozměrů', gray: true, v: '0,00 %', a: 'r' },
  { n: 'Doplňování', section: true },
  { n: 'Vlastní počet balení na model', c: 0, x: true },
  { n: 'Počet balení na model', gray: true, v: '0,00', a: 'r' },
];

const strip = [<PagesCheck />, <Pages />, <PagesQ />, <Cursor />, <Clip />, <XDown />, <XGear />, <Csv />, <TableSwap />, <Bars />];

const Prop = ({ p, odd }: { p: P; odd: boolean }) => {
  if (p.section) {
    return <SectionRow><SectionChev><Chevron down c="#9a9a9a" /></SectionChev>{p.n}</SectionRow>;
  }
  const align = p.c !== undefined ? 'center' : p.a === 'r' ? 'right' : 'left';
  return (
    <PropRow $odd={odd}>
      <Gutter />
      <PropName $gray={p.gray} $sel={p.sel}>{p.n}</PropName>
      <IconCell>{p.m === 'g' ? <MarkGreen /> : p.m === 'o' ? <MarkOrange /> : null}</IconCell>
      <PropValue $align={align} $sel={p.sel}>
        {p.bar ? <Swatch $full $c="#a6b43a" /> : null}
        {p.c !== undefined ? <Check $on={p.c === 1} $sel={p.sel}>{p.c === 1 ? <Tick /> : null}</Check> : p.v}
      </PropValue>
      <IconCell>{p.x ? <ResetX /> : null}</IconCell>
      <IconCell><Cursor s={18} /></IconCell>
      <IconCell />
    </PropRow>
  );
};

export default function App() {
  return (
    <>
      <Global />
      <Window>
        <TitleBar>
          <Lights><Light $c="#f2615a" /><Light $c="#f7bd45" /><Light $c="#5cc24e" /></Lights>
          <WindowTitle>Quant Explorer - Kategorie</WindowTitle>
          <span />
        </TitleBar>
        <MainToolbar>
          <ToolToggle $on><Panel /></ToolToggle>
          <ToolToggle><Star /></ToolToggle>
          <ToolToggle><ArrowBack /></ToolToggle>
          <ToolToggle><ArrowFwd /></ToolToggle>
          <ToolSpacer />
          <SmileSlot><Smile /></SmileSlot>
        </MainToolbar>
        <Workspace>
          <Sidebar>
            <SideTools>
              <SideToolIcon $gap={35}><Collapse /></SideToolIcon>
              <SideToolIcon $gap={23}><TableGear /></SideToolIcon>
              <SearchBox $w={267}><Magnifier /></SearchBox>
            </SideTools>
            <SideTitle>Zobrazení</SideTitle>
            <NavList>
              {nav.map((n, i) => (
                <NavRow key={i}>
                  {n.sel ? <NavHighlight /> : null}
                  <NavChevron>{n.arrow ? <Chevron c={n.sel ? '#c6d4f6' : '#b6b6b6'} /> : null}</NavChevron>
                  <NavIconBox $sel={n.sel}>
                    {n.icon}
                    {n.badge ? <Badge>9+</Badge> : null}
                  </NavIconBox>
                  {n.label ? <NavLabel $sel={n.sel}>{n.label}</NavLabel> : null}
                </NavRow>
              ))}
            </NavList>
            <LogoArea><Brand /><LogoText>Quant</LogoText></LogoArea>
          </Sidebar>
          <ToolStrip>
            {strip.map((s, i) => <StripIcon key={i}>{s}</StripIcon>)}
          </ToolStrip>
          <CenterPane>
            <CenterTools>
              <TableIconSlot><TableGear /></TableIconSlot>
              <CenterSearch $w={217}><Magnifier /></CenterSearch>
              <ToolButton><Plus />Nové</ToolButton>
              <ToolButton><Save />Uložit</ToolButton>
              <ToolButton><Imports />Importy</ToolButton>
              <ToolButton><Edit />Volitelné vlastnosti</ToolButton>
              <ToolButton><MoreDots><Dots /></MoreDots>Více</ToolButton>
            </CenterTools>
            <TableBox>
              <HeadRow>
                <HeadCell>Označené</HeadCell>
                <HeadCell>Poslední změna</HeadCell>
                <HeadCell>Id</HeadCell>
                <HeadCell>Externí Id</HeadCell>
                <HeadCell><HeadStack>Typ<br />objednávání</HeadStack></HeadCell>
                <HeadCell>Název</HeadCell>
                <HeadCell>Barva</HeadCell>
              </HeadRow>
              <Body>
                {rows.map((r, i) => {
                  const sel = i === 5;
                  return (
                    <TRow key={i} $sel={sel}>
                      <TreeCell $level={r[0]}>
                        <Chevron down={r[1] === 'd'} c={r[1] ? '#b6b6b6' : 'transparent'} w={14} h={16} />
                        <TreeCheck $level={r[0]}><Check /></TreeCheck>
                      </TreeCell>
                      <Cell $size={23} $sel={sel}>{r[2]}</Cell>
                      <Cell $size={22.6} $sel={sel}>{r[3]}</Cell>
                      <Cell $sel={sel} />
                      <TypeCell $pad={14} $sel={sel}>{i < 22 ? 'Standardní' : ''}</TypeCell>
                      <Cell $pad={2} $sel={sel}>{r[4]}</Cell>
                      <SwatchCell $sel={sel}>
                        <Swatch $c={r[5] ?? undefined} />
                        <Corner $c={r[6] ? '#2e7d4f' : '#ee7a30'} />
                      </SwatchCell>
                    </TRow>
                  );
                })}
              </Body>
              <HScroll><HThumb /></HScroll>
            </TableBox>
          </CenterPane>
          <Splitter>
            <Svg w={10} h={14} vb="0 0 10 14"><path d="M0 7L10 0V14z" fill="#111" /></Svg>
            <Svg w={10} h={14} vb="0 0 10 14"><path d="M10 7L0 0V14z" fill="#111" /></Svg>
            <Grip />
          </Splitter>
          <RightPane>
            <RightTools><SearchBox $w={528}><Magnifier /></SearchBox></RightTools>
            <RightBody>
              <PropList>
                {props.map((p, i) => <Prop key={i} p={p} odd={i % 2 === 1} />)}
              </PropList>
              <ScrollTrack><ScrollThumb /></ScrollTrack>
            </RightBody>
          </RightPane>
        </Workspace>
        <RowFocus />
        <Callout>
          <div>Tuto možnost zvolte, pokud chcete, aby<br />se jako náhrady nabízely pouze produkty<br />ze stejné kategorie (její nejnižší úrovně).</div>
        </Callout>
        <CalloutTail viewBox="0 0 180 80">
          <path d="M7 17L172 7L7 72z" fill="#eef4fb" />
          <path d="M4 19L172 7L4 74" fill="none" stroke="#3574b4" strokeWidth="5" />
        </CalloutTail>
      </Window>
    </>
  );
}
